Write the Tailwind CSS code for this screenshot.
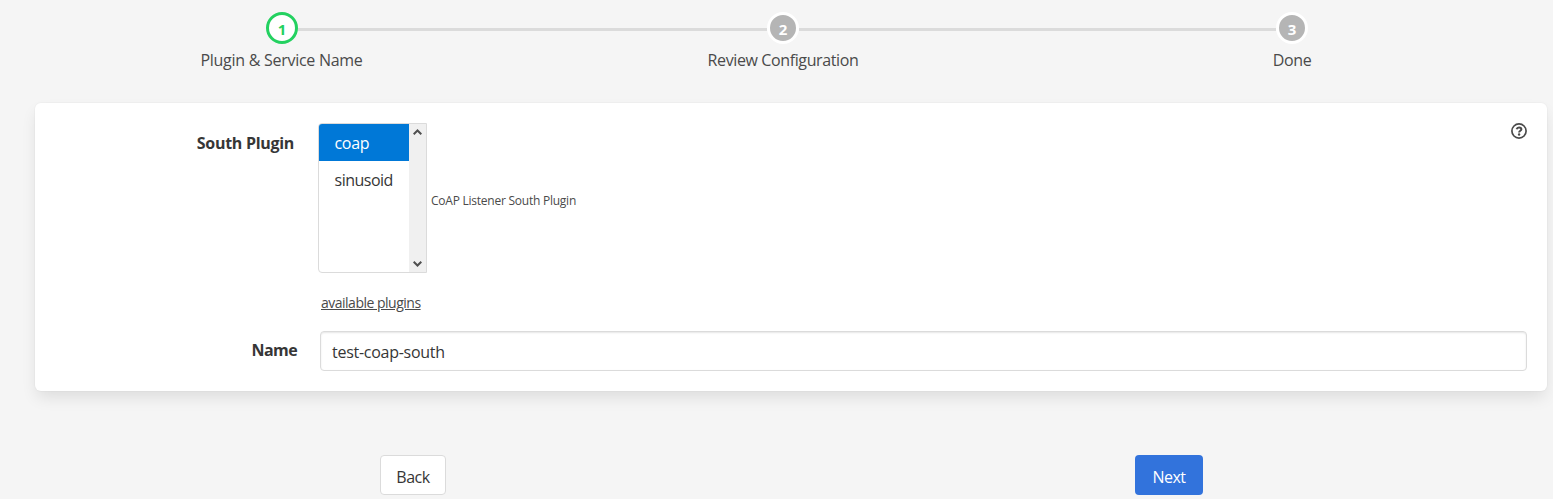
<!DOCTYPE html>
<html lang="en">
<head>
<meta charset="utf-8">
<title>Add South Service</title>
<script src="https://cdn.jsdelivr.net/npm/@tailwindcss/browser@4"></script>
</head>
<body class="h-[499px] overflow-hidden bg-[#f5f5f5] font-['Open_Sans','Noto_Sans',sans-serif] text-[16px] leading-6 text-[#4a4a4a]">
<header class="h-[103px] pt-3">
  <div class="flex items-center pl-[266px] text-[15px] font-bold">
    <span class="flex size-8 items-center justify-center rounded-full border-3 border-[#23d160] bg-white pt-px text-[#23d160]">1</span>
    <span class="mt-0.5 h-[3px] w-[469px] bg-[#dbdbdb]"></span>
    <span class="flex size-8 items-center justify-center rounded-full border-3 border-white bg-[#b5b5b5] pt-px text-white">2</span>
    <span class="mt-0.5 h-[3px] w-[477px] bg-[#dbdbdb]"></span>
    <span class="flex size-8 items-center justify-center rounded-full border-3 border-white bg-[#b5b5b5] pt-px text-white">3</span>
  </div>
  <div class="mt-1 flex whitespace-nowrap text-center">
    <div class="w-[563px]"><span class="tracking-[-0.27px]">Plugin &amp; Service Name</span></div>
    <div class="ml-px w-[438px]"><span class="tracking-[-0.38px]">Review Configuration</span></div>
    <div class="ml-20 w-[420px]"><span class="tracking-[-0.4px]">Done</span></div>
  </div>
</header>
<main class="ml-[35px] h-72 w-[1512px] rounded-md bg-white shadow-[0_8px_16px_-2px_rgba(10,10,10,0.1),0_0_0_1px_rgba(10,10,10,0.02)]">
  <div class="flex pt-5">
    <div class="w-[259px] pt-2 text-right font-bold text-[#363636]"><span class="tracking-[-0.3px]">South Plugin</span></div>
    <div class="ml-6 flex h-[150px] w-[109px] overflow-hidden rounded-l border border-[#dbdbdb] text-[#363636]">
      <div class="w-[90px]">
        <div class="h-[37px] bg-[#0078d7] pt-[7px] pl-[15.5px] text-white"><span class="tracking-[-0.3px]">coap</span></div>
        <div class="h-[37px] pt-[7px] pl-[15.5px]"><span class="tracking-[-0.5px]">sinusoid</span></div>
      </div>
      <div class="flex w-[17px] flex-col items-center justify-between bg-[#f0f0f0] py-[5px]">
        <svg width="9" height="6" viewBox="0 0 9 6" fill="none" stroke="#505050" stroke-width="2"><path d="M.7 5.3 4.5 1.5 8.3 5.3"/></svg>
        <svg width="9" height="6" viewBox="0 0 9 6" fill="none" stroke="#505050" stroke-width="2"><path d="M.7.7 4.5 4.5 8.3.7"/></svg>
      </div>
    </div>
    <div class="ml-1 pt-[69px] text-[12px] leading-[18px] whitespace-nowrap"><span class="tracking-[-0.24px]">CoAP Listener South Plugin</span></div>
    <svg class="mr-5 ml-auto size-4" viewBox="0 0 16 16" fill="none" stroke="#4a4a4a"><circle cx="8" cy="8" r="7.1" stroke-width="1.7"/><path d="M5.6 6.3C6 5 6.9 4.4 8 4.4c1.4 0 2.4.8 2.4 1.9C10.4 7.8 8.1 7.8 8.1 9.5" stroke-width="2"/><circle cx="8.1" cy="11.5" r="1.2" fill="#4a4a4a" stroke="none"/></svg>
  </div>
  <div class="mt-5 ml-[286px] h-5 text-[14px] leading-5"><a class="tracking-[-0.5px] underline">available plugins</a></div>
  <div class="mt-[18px] flex">
    <div class="w-[262px] pt-[7px] text-right font-bold text-[#363636]"><span class="tracking-[-0.6px]">Name</span></div>
    <div class="ml-[23px] h-10 w-[1207px] rounded border border-[#dbdbdb] pt-2 pl-[11px] text-[#363636] shadow-[inset_0_1px_2px_rgba(10,10,10,0.1)]"><span class="tracking-[-0.27px]">test-coap-south</span></div>
  </div>
</main>
<footer class="mt-16 flex pl-[380px]">
  <button class="h-10 w-[66px] rounded border border-[#dbdbdb] bg-white pt-[3px] text-[#363636]"><span class="tracking-[-0.5px]">Back</span></button>
  <button class="ml-[689px] h-10 w-[68px] rounded bg-[#3273dc] pt-[3px] text-white"><span class="tracking-[-0.5px]">Next</span></button>
</footer>
</body>
</html>
